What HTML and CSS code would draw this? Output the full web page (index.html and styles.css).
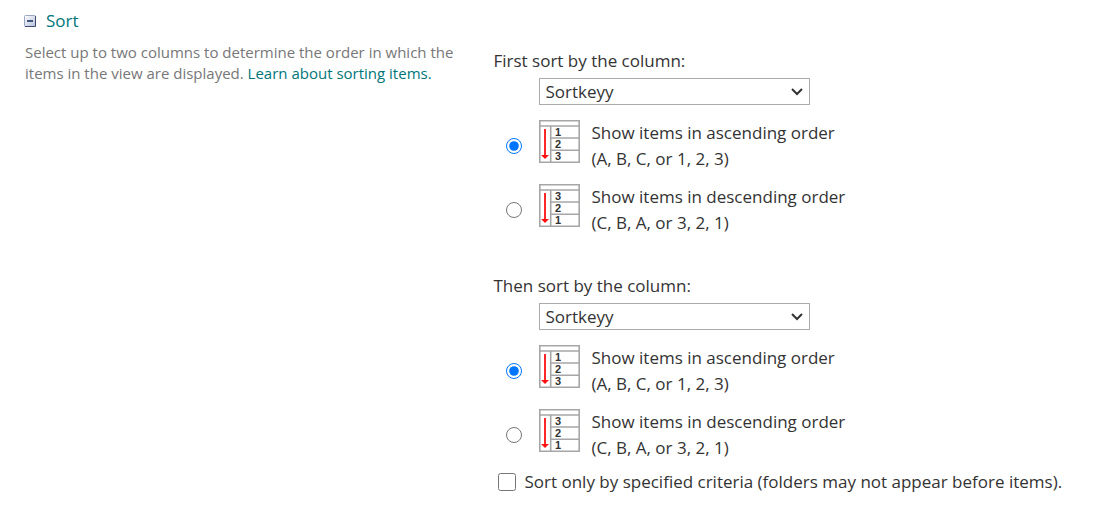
FILE: index.html
```html
<!DOCTYPE html>
<html lang="en">
<head>
  <meta charset="UTF-8">
  <meta name="viewport" content="width=device-width, initial-scale=1.0">
  <link rel="stylesheet" href="styles.css">
</head>
<body>

  <!-- Icons used by the sort options -->
  <svg class="symbols" aria-hidden="true">
    <symbol id="sort-table" viewBox="0 0 41 43">
      <path d="M0.8 0.8h39.4v41.4H0.8zM1 6h39M11.7 6v36M12 18h28M12 30.3h28" fill="none" stroke="#a6a6a8" stroke-width="1.6"/>
      <path d="M6 9v27" fill="none" stroke="#ff1010" stroke-width="1.8"/>
      <path d="M2 35h8l-4 4z" fill="#ff1010"/>
    </symbol>
  </svg>

  <div class="container">
    <div class="description">
      <h1 class="title">
        <button type="button" class="toggle" aria-label="Collapse">
          <svg width="12" height="12" viewBox="0 0 12 12">
            <defs>
              <linearGradient id="shade" x1="0" y1="0" x2="1" y2="1">
                <stop offset="0" stop-color="#ffffff"/>
                <stop offset="1" stop-color="#b4c0d8"/>
              </linearGradient>
            </defs>
            <rect x="0.5" y="0.5" width="11" height="11" rx="1" fill="url(#shade)" stroke="#9aa6c4"/>
            <path d="M11.5 1v10.5H1" fill="none" stroke="#3c4a6e"/>
            <path d="M3 6h6" stroke="#44557f" stroke-width="2"/>
          </svg>
        </button>
        <a href="#">Sort</a>
      </h1>
      <p>Select up to two columns to determine the order in which the items in the view are displayed. <a href="#">Learn about sorting items.</a></p>
    </div>

    <div class="settings">
      <div class="sort-group">
        <label for="firstSort">First sort by the column:</label>
        <select id="firstSort">
          <option>Sortkeyy</option>
        </select>
        <div class="option">
          <input type="radio" name="firstOrder" id="firstAsc" checked>
          <svg class="order-icon" viewBox="0 0 41 43" aria-hidden="true">
            <use href="#sort-table"/>
            <text x="16" y="16">1</text>
            <text x="16" y="28">2</text>
            <text x="16" y="40">3</text>
          </svg>
          <label for="firstAsc">Show items in ascending order<br>(A, B, C, or 1, 2, 3)</label>
        </div>
        <div class="option">
          <input type="radio" name="firstOrder" id="firstDesc">
          <svg class="order-icon" viewBox="0 0 41 43" aria-hidden="true">
            <use href="#sort-table"/>
            <text x="16" y="16">3</text>
            <text x="16" y="28">2</text>
            <text x="16" y="40">1</text>
          </svg>
          <label for="firstDesc">Show items in descending order<br>(C, B, A, or 3, 2, 1)</label>
        </div>
      </div>

      <div class="sort-group">
        <label for="thenSort">Then sort by the column:</label>
        <select id="thenSort">
          <option>Sortkeyy</option>
        </select>
        <div class="option">
          <input type="radio" name="thenOrder" id="thenAsc" checked>
          <svg class="order-icon" viewBox="0 0 41 43" aria-hidden="true">
            <use href="#sort-table"/>
            <text x="16" y="16">1</text>
            <text x="16" y="28">2</text>
            <text x="16" y="40">3</text>
          </svg>
          <label for="thenAsc">Show items in ascending order<br>(A, B, C, or 1, 2, 3)</label>
        </div>
        <div class="option">
          <input type="radio" name="thenOrder" id="thenDesc">
          <svg class="order-icon" viewBox="0 0 41 43" aria-hidden="true">
            <use href="#sort-table"/>
            <text x="16" y="16">3</text>
            <text x="16" y="28">2</text>
            <text x="16" y="40">1</text>
          </svg>
          <label for="thenDesc">Show items in descending order<br>(C, B, A, or 3, 2, 1)</label>
        </div>
      </div>

      <div class="criteria">
        <input type="checkbox" id="criteria">
        <label for="criteria">Sort only by specified criteria (folders may not appear before items).</label>
      </div>
    </div>
  </div>

</body>
</html>
```

FILE: styles.css
```css
body {
  margin: 0;
  background-color: #fff;
  color: #333;
  font-family: "Segoe UI", "Open Sans", "Noto Sans", sans-serif;
  font-size: 17px;
  line-height: 26px;
}

a {
  color: #00767a;
  text-decoration: none;
}

.symbols {
  display: none;
}

.container {
  display: flex;
  padding: 8px 24px;
}

.description {
  flex: 0 0 44%;
  box-sizing: border-box;
  padding-right: 24px;
  color: #777;
  font-size: 15px;
  line-height: 21px;
}

.description p {
  margin: 8px 0 0 1px;
}

.title {
  display: flex;
  align-items: center;
  gap: 10px;
  margin: 0;
  font-size: 17px;
  font-weight: normal;
  line-height: 26px;
}

.toggle {
  display: flex;
  padding: 0;
  border: 0;
  background: none;
}

.settings {
  flex: 1;
  padding-top: 40px;
}

.sort-group {
  display: flex;
  flex-direction: column;
  align-items: flex-start;
  gap: 12px;
  margin-bottom: 37px;
}

.sort-group:nth-child(2) {
  margin-bottom: 8px;
}

.sort-group select {
  appearance: none;
  width: 271px;
  height: 27px;
  margin: -8px 0 3px 46px;
  padding: 0 5px;
  border: 1px solid #ababab;
  border-radius: 0;
  background: #fff url("data:image/svg+xml,%3Csvg xmlns='http://www.w3.org/2000/svg' width='14' height='8'%3E%3Cpath d='M2 1l5 5 5-5' fill='none' stroke='%23333' stroke-width='2'/%3E%3C/svg%3E") no-repeat right 5px center;
  color: #333;
  font: inherit;
  line-height: 25px;
}

.option {
  display: flex;
  align-items: center;
  padding-left: 13px;
}

.option input {
  width: 16px;
  height: 16px;
  margin: 0 17px 0 0;
}

.order-icon {
  align-self: flex-start;
  width: 41px;
  height: 43px;
  margin-right: 11px;
  fill: #333;
  font: bold 11px "Liberation Sans", Arial, sans-serif;
}

.criteria {
  display: flex;
  align-items: center;
  gap: 8px;
  padding-left: 5px;
}

.criteria input {
  width: 18px;
  height: 18px;
  margin: 0;
}
```
